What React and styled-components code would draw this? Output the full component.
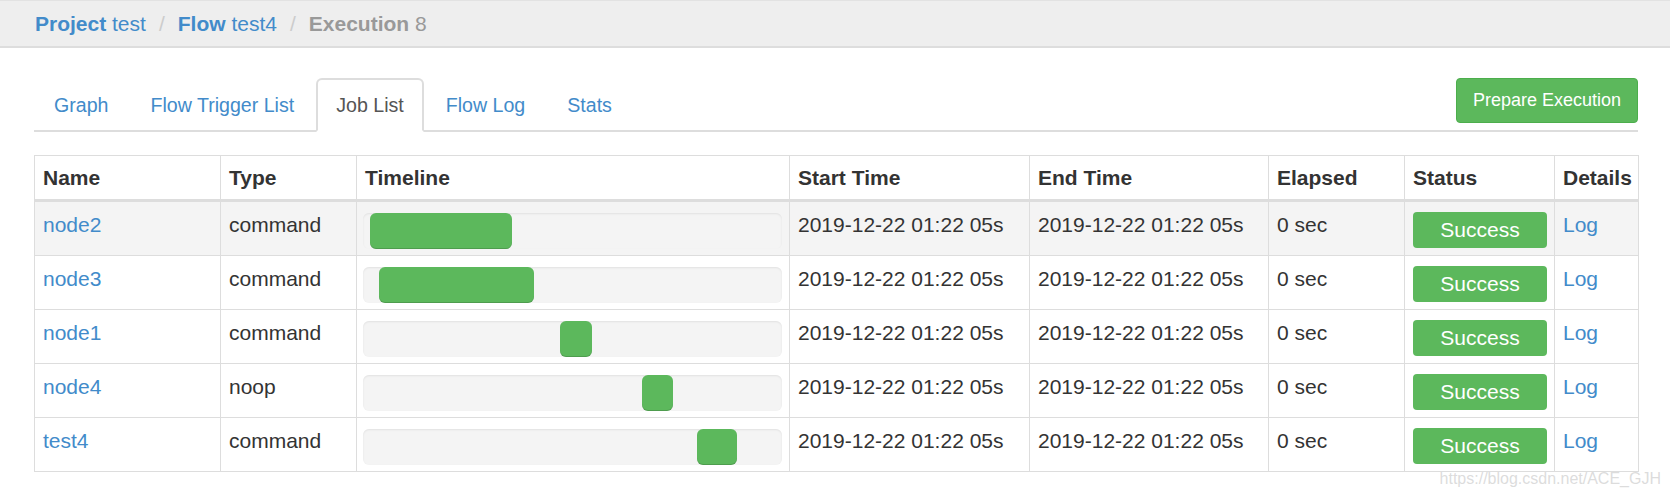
import React from "react";
import styled, { createGlobalStyle } from "styled-components";

const GlobalStyle = createGlobalStyle`
  body {
    margin: 0;
    background: #fff;
    color: #333;
    font-family: "Liberation Sans", Arial, sans-serif;
  }
`;

const Page = styled.div`
  position: relative;
  min-height: 496px;
`;

const Header = styled.div`
  display: flex;
  align-items: center;
  box-sizing: border-box;
  height: 48px;
  padding-left: 35px;
  background: #eee;
  border-top: 1px solid #e2e2e2;
  border-bottom: 2px solid #ddd;
  font-size: 21px;
`;

const Crumb = styled.span`
  color: ${(p) => (p.$muted ? "#999" : "#428bca")};
  strong {
    font-weight: bold;
  }
`;

const Sep = styled.span`
  color: #ccc;
  padding: 0 13px;
`;

const Main = styled.div`
  padding: 30px 32px 0 34px;
`;

const TabBar = styled.div`
  display: flex;
  align-items: flex-end;
  border-bottom: 2px solid #ddd;
`;

const Tab = styled.a`
  display: block;
  margin-right: 2px;
  margin-bottom: -2px;
  padding: 11px 18px;
  font-size: 19.6px;
  line-height: 28px;
  color: ${(p) => (p.$active ? "#555" : "#428bca")};
  background: ${(p) => (p.$active ? "#fff" : "transparent")};
  border: 2px solid ${(p) => (p.$active ? "#ddd" : "transparent")};
  border-bottom-color: transparent;
  border-radius: 6px 6px 0 0;
  text-decoration: none;
  cursor: pointer;
`;

const PrimaryButton = styled.button`
  align-self: flex-start;
  margin-left: auto;
  height: 45px;
  padding: 0 16px;
  font-family: inherit;
  font-size: 18px;
  color: #fff;
  background: #5cb85c;
  border: 1px solid #4cae4c;
  border-radius: 4px;
`;

const Table = styled.table`
  width: 100%;
  margin-top: 23px;
  border-collapse: collapse;
  table-layout: fixed;
  font-size: 21px;
`;

const Th = styled.th`
  padding: 7px 8px;
  line-height: 29px;
  text-align: left;
  font-weight: bold;
  border: 1px solid #ddd;
  border-bottom: 3px solid #ddd;
`;

const Row = styled.tr`
  background: ${(p) => (p.$striped ? "#f4f4f4" : "#fff")};
`;

const Td = styled.td`
  padding: 10px 8px 7px;
  line-height: 25px;
  vertical-align: top;
  border: 1px solid #ddd;
  white-space: nowrap;
`;

const TimelineTd = styled(Td)`
  padding: 11px 7px 6px 6px;
`;

const Link = styled.a`
  color: #428bca;
  text-decoration: none;
`;

const Progress = styled.div`
  display: flex;
  height: 36px;
  background: #f4f4f4;
  border-radius: 6px;
  box-shadow: inset 0 1px 2px rgba(0, 0, 0, 0.08);
`;

const Bar = styled.div`
  height: 100%;
  background: #5cb85c;
  border-radius: 6px;
  box-shadow: inset 0 -1px 0 rgba(0, 0, 0, 0.15);
`;

const StatusLabel = styled.div`
  width: 134px;
  height: 36px;
  line-height: 36px;
  text-align: center;
  color: #fff;
  background: #5cb85c;
  border-radius: 4px;
`;

const Watermark = styled.div`
  position: absolute;
  right: 9px;
  bottom: 8px;
  font-size: 16px;
  color: rgba(185, 185, 185, 0.5);
  pointer-events: none;
`;

const columns = [
  ["Name", 186],
  ["Type", 136],
  ["Timeline", 433],
  ["Start Time", 240],
  ["End Time", 239],
  ["Elapsed", 136],
  ["Status", 150],
  ["Details", 84],
];

const jobs = [
  { name: "node2", type: "command", left: 1.67, width: 34.0 },
  { name: "node3", type: "command", left: 3.8, width: 37.1 },
  { name: "node1", type: "command", left: 47.1, width: 7.6 },
  { name: "node4", type: "noop", left: 66.7, width: 7.4 },
  { name: "test4", type: "command", left: 79.8, width: 9.5 },
];

const tabs = ["Graph", "Flow Trigger List", "Job List", "Flow Log", "Stats"];

export default function App() {
  return (
    <Page>
      <GlobalStyle />
      <Header>
        <Crumb>
          <strong>Project</strong> test
        </Crumb>
        <Sep>/</Sep>
        <Crumb>
          <strong>Flow</strong> test4
        </Crumb>
        <Sep>/</Sep>
        <Crumb $muted>
          <strong>Execution</strong> 8
        </Crumb>
      </Header>
      <Main>
        <TabBar>
          {tabs.map((t) => (
            <Tab key={t} $active={t === "Job List"}>
              {t}
            </Tab>
          ))}
          <PrimaryButton>Prepare Execution</PrimaryButton>
        </TabBar>
        <Table>
          <colgroup>
            {columns.map(([c, w]) => (
              <col key={c} style={{ width: w }} />
            ))}
          </colgroup>
          <thead>
            <tr>
              {columns.map(([c]) => (
                <Th key={c}>{c}</Th>
              ))}
            </tr>
          </thead>
          <tbody>
            {jobs.map((job, i) => (
              <Row key={job.name} $striped={i === 0}>
                <Td>
                  <Link>{job.name}</Link>
                </Td>
                <Td>{job.type}</Td>
                <TimelineTd>
                  <Progress>
                    <Bar style={{ marginLeft: `${job.left}%`, width: `${job.width}%` }} />
                  </Progress>
                </TimelineTd>
                <Td>2019-12-22 01:22 05s</Td>
                <Td>2019-12-22 01:22 05s</Td>
                <Td>0 sec</Td>
                <Td>
                  <StatusLabel>Success</StatusLabel>
                </Td>
                <Td>
                  <Link>Log</Link>
                </Td>
              </Row>
            ))}
          </tbody>
        </Table>
      </Main>
      <Watermark>https://blog.csdn.net/ACE_GJH</Watermark>
    </Page>
  );
}
